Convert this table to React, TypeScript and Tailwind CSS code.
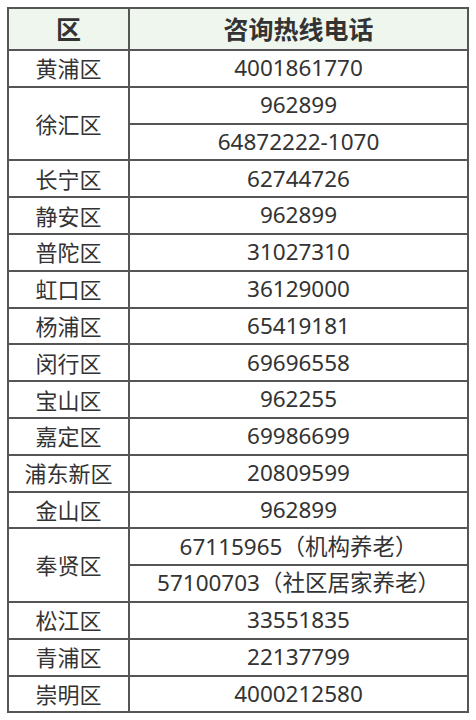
import React from "react";

type Row = { d: string; p: string[] };

const rows: Row[] = [
  { d: "黄浦区", p: ["4001861770"] },
  { d: "徐汇区", p: ["962899", "64872222-1070"] },
  { d: "长宁区", p: ["62744726"] },
  { d: "静安区", p: ["962899"] },
  { d: "普陀区", p: ["31027310"] },
  { d: "虹口区", p: ["36129000"] },
  { d: "杨浦区", p: ["65419181"] },
  { d: "闵行区", p: ["69696558"] },
  { d: "宝山区", p: ["962255"] },
  { d: "嘉定区", p: ["69986699"] },
  { d: "浦东新区", p: ["20809599"] },
  { d: "金山区", p: ["962899"] },
  { d: "奉贤区", p: ["67115965（机构养老）", "57100703（社区居家养老）"] },
  { d: "松江区", p: ["33551835"] },
  { d: "青浦区", p: ["22137799"] },
  { d: "崇明区", p: ["4000212580"] },
];

export default function App() {
  return (
    <div
      className="w-[476px] h-[720px] bg-white pl-[7px] pt-[7px] text-[#333]"
      style={{ fontFamily: '"Noto Sans", "Noto Sans CJK SC", sans-serif' }}
    >
      <table className="w-[462px] border-collapse border-2 border-[#555] table-fixed">
        <colgroup>
          <col className="w-[121px]" />
          <col />
        </colgroup>
        <thead>
          <tr className="h-[42px] bg-[#eef6ed]">
            <th className="border-2 border-[#555] text-[25px] font-bold text-center leading-none p-0">区</th>
            <th className="border-2 border-[#555] text-[25px] font-bold text-center leading-none p-0">咨询热线电话</th>
          </tr>
        </thead>
        <tbody>
          {rows.map((r) =>
            r.p.map((ph, i) => (
              <tr key={r.d + i} className="h-[36.8px]">
                {i === 0 && (
                  <td
                    rowSpan={r.p.length}
                    className="border-2 border-[#555] text-[22px] text-center leading-none p-0 whitespace-nowrap"
                  >
                    {r.d}
                  </td>
                )}
                <td className="border-2 border-[#555] text-[22.5px] text-center leading-none p-0 whitespace-nowrap">
                  {ph}
                </td>
              </tr>
            ))
          )}
        </tbody>
      </table>
    </div>
  );
}
